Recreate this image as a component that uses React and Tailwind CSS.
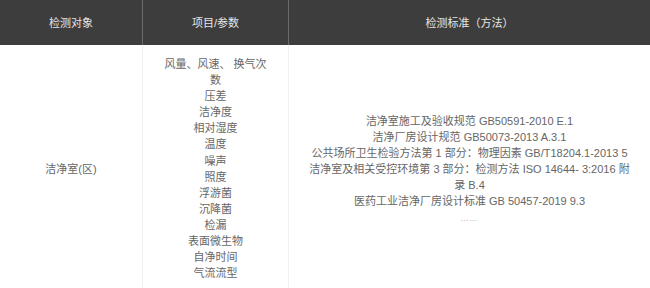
const items = [
  '风量、风速、 换气次',
  '数',
  '压差',
  '洁净度',
  '相对湿度',
  '温度',
  '噪声',
  '照度',
  '浮游菌',
  '沉降菌',
  '检漏',
  '表面微生物',
  '自净时间',
  '气流流型',
];

const standards = [
  '洁净室施工及验收规范 GB50591-2010 E.1',
  '洁净厂房设计规范 GB50073-2013 A.3.1',
  '公共场所卫生检验方法第 1 部分：物理因素 GB/T18204.1-2013 5',
  '洁净室及相关受控环境第 3 部分：检测方法 ISO 14644- 3:2016 附',
  '录 B.4',
  '医药工业洁净厂房设计标准 GB 50457-2019 9.3',
];

const App = () => {
  return (
    <div className="w-[650px] bg-white font-['Liberation_Sans','Noto_Sans_CJK_SC',sans-serif] text-[11px] leading-[16px]">
      {/* 表頭 */}
      <div className="grid grid-cols-[143px_146px_1fr] h-[45px] bg-[#3d3d3d] text-[#e6e6e6]">
        <div className="flex items-center justify-center border-r border-[#6a6a6a]">检测对象</div>
        <div className="flex items-center justify-center border-r border-[#6a6a6a]">项目/参数</div>
        <div className="flex items-center justify-center">检测标准（方法）</div>
      </div>

      {/* 內容 */}
      <div className="grid grid-cols-[143px_146px_1fr] text-[#666]">
        <div className="flex items-center justify-center border-r border-[#f0f0f0]">洁净室(区)</div>
        <div className="flex flex-col items-center justify-center text-center border-r border-[#f0f0f0] pt-[11px] pb-[12px] leading-[16.1px]">
          {items.map((item) => (
            <div key={item}>{item}</div>
          ))}
        </div>
        <div className="flex flex-col items-center justify-center text-center pt-[4px]">
          {standards.map((line) => (
            <div key={line}>{line}</div>
          ))}
          <div className="text-[8px] leading-[20px] tracking-[1px] text-[#999]">……</div>
        </div>
      </div>
    </div>
  );
};

export default App;
